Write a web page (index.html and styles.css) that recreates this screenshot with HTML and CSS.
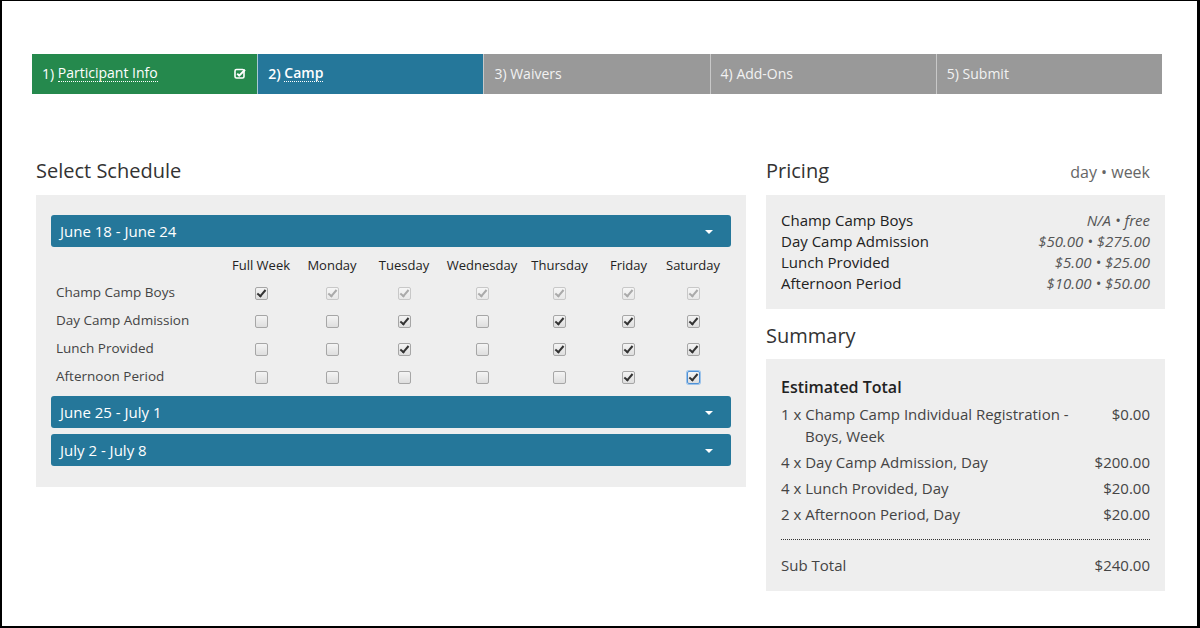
FILE: index.html
```html
<!DOCTYPE html>
<html lang="en">
<head>
  <meta charset="UTF-8">
  <title>Camp Registration</title>
  <link rel="stylesheet" href="styles.css">
</head>
<body>
  <div class="page">
    <div class="steps">
      <div class="step done">1) <span class="step-link">Participant Info</span>
        <svg class="step-check" width="12" height="11" viewBox="0 0 12 11">
          <rect x="1" y="1.5" width="9" height="8.5" rx="1.5" fill="none" stroke="#fff" stroke-width="1.6"/>
          <path d="M3.2 5.6 L5.2 7.6 L11 1.8" fill="none" stroke="#fff" stroke-width="2"/>
        </svg>
      </div>
      <div class="step active">2) <span class="step-link">Camp</span></div>
      <div class="step">3) Waivers</div>
      <div class="step">4) Add-Ons</div>
      <div class="step">5) Submit</div>
    </div>

    <div class="main">
      <div class="col-left">
        <h2 class="section-title">Select Schedule</h2>
        <div class="panel schedule">
          <div class="week-head">June 18 - June 24<span class="caret"></span></div>
          <table class="week-table">
            <colgroup>
              <col style="width:174px"><col style="width:72px"><col style="width:70px"><col style="width:74px">
              <col style="width:82px"><col style="width:73px"><col style="width:65px"><col style="width:64px">
            </colgroup>
            <thead>
              <tr><th></th><th>Full Week</th><th>Monday</th><th>Tuesday</th><th>Wednesday</th><th>Thursday</th><th>Friday</th><th>Saturday</th></tr>
            </thead>
            <tbody>
              <tr>
                <td class="label">Champ Camp Boys</td>
                <td><input type="checkbox" checked></td>
                <td><input type="checkbox" checked disabled></td>
                <td><input type="checkbox" checked disabled></td>
                <td><input type="checkbox" checked disabled></td>
                <td><input type="checkbox" checked disabled></td>
                <td><input type="checkbox" checked disabled></td>
                <td><input type="checkbox" checked disabled></td>
              </tr>
              <tr>
                <td class="label">Day Camp Admission</td>
                <td><input type="checkbox"></td>
                <td><input type="checkbox"></td>
                <td><input type="checkbox" checked></td>
                <td><input type="checkbox"></td>
                <td><input type="checkbox" checked></td>
                <td><input type="checkbox" checked></td>
                <td><input type="checkbox" checked></td>
              </tr>
              <tr>
                <td class="label">Lunch Provided</td>
                <td><input type="checkbox"></td>
                <td><input type="checkbox"></td>
                <td><input type="checkbox" checked></td>
                <td><input type="checkbox"></td>
                <td><input type="checkbox" checked></td>
                <td><input type="checkbox" checked></td>
                <td><input type="checkbox" checked></td>
              </tr>
              <tr>
                <td class="label">Afternoon Period</td>
                <td><input type="checkbox"></td>
                <td><input type="checkbox"></td>
                <td><input type="checkbox"></td>
                <td><input type="checkbox"></td>
                <td><input type="checkbox"></td>
                <td><input type="checkbox" checked></td>
                <td><input type="checkbox" class="focused" checked></td>
              </tr>
            </tbody>
          </table>
          <div class="week-head">June 25 - July 1<span class="caret"></span></div>
          <div class="week-head">July 2 - July 8<span class="caret"></span></div>
        </div>
      </div>

      <div class="col-right">
        <div class="section-row">
          <h2 class="section-title">Pricing</h2>
          <span class="unit-note">day &bull; week</span>
        </div>
        <div class="panel pricing">
          <div class="price-row"><span>Champ Camp Boys</span><em>N/A &bull; free</em></div>
          <div class="price-row"><span>Day Camp Admission</span><em>$50.00 &bull; $275.00</em></div>
          <div class="price-row"><span>Lunch Provided</span><em>$5.00 &bull; $25.00</em></div>
          <div class="price-row"><span>Afternoon Period</span><em>$10.00 &bull; $50.00</em></div>
        </div>

        <h2 class="section-title summary-title">Summary</h2>
        <div class="panel summary">
          <div class="summary-head">Estimated Total</div>
          <div class="line-item"><span class="item-name">1 x Champ Camp Individual Registration - Boys, Week</span><span class="item-price">$0.00</span></div>
          <div class="line-item"><span class="item-name">4 x Day Camp Admission, Day</span><span class="item-price">$200.00</span></div>
          <div class="line-item"><span class="item-name">4 x Lunch Provided, Day</span><span class="item-price">$20.00</span></div>
          <div class="line-item"><span class="item-name">2 x Afternoon Period, Day</span><span class="item-price">$20.00</span></div>
          <div class="subtotal"><span>Sub Total</span><span>$240.00</span></div>
        </div>
      </div>
    </div>
  </div>
</body>
</html>
```

FILE: styles.css
```css
html, body {
  margin: 0;
  height: 100%;
}

body {
  font-family: 'Open Sans', sans-serif;
  color: #333;
  background: #fff;
  box-sizing: border-box;
  border-top: 1px solid #000;
  border-left: 2px solid #000;
  border-right: 3px solid #000;
  border-bottom: 2px solid #000;
  overflow: hidden;
}

.page {
  padding: 53px 0 0 30px;
}

/* step bar */
.steps {
  display: flex;
  width: 1130px;
  height: 40px;
}

.step {
  flex: 1;
  display: flex;
  align-items: center;
  padding: 0 10px 1px;
  background-color: #999;
  color: #f2f2f2;
  font-size: 14px;
  border-left: 1px solid #c8c8c8;
  white-space: pre;
}

.step.done {
  background-color: #25894d;
  color: #fff;
  border-left: none;
}

.step.active {
  background-color: #25779a;
  color: #fff;
  font-weight: 600;
  border-left-color: #a9c9d6;
}

.step-link {
  border-bottom: 1px dotted #fff;
  line-height: 16px;
}

.step-check {
  margin-left: auto;
  margin-right: 1px;
}

/* columns */
.main {
  display: flex;
  gap: 20px;
  margin-top: 64px;
  padding-left: 4px;
}

.col-left {
  width: 710px;
}

.col-right {
  width: 399px;
}

.section-title {
  margin: 0 0 11px;
  font-size: 20px;
  font-weight: 400;
  line-height: 26px;
  color: #333;
}

.section-row {
  display: flex;
  justify-content: space-between;
  align-items: baseline;
  padding-right: 15px;
}

.unit-note {
  font-size: 16px;
  color: #666;
}

.panel {
  background-color: #eee;
}

/* schedule */
.schedule {
  padding: 20px 15px 15px;
}

.week-head {
  position: relative;
  height: 32px;
  line-height: 32px;
  padding-left: 9px;
  margin-bottom: 6px;
  border-radius: 3px;
  background-color: #25779a;
  color: #fff;
  font-size: 15px;
}

.caret {
  position: absolute;
  right: 18px;
  top: 15px;
  border-left: 4px solid transparent;
  border-right: 4px solid transparent;
  border-top: 4px solid #fff;
}

.week-table {
  table-layout: fixed;
  border-collapse: collapse;
  width: 674px;
  margin: -2px 0 6px;
}

.week-table th {
  height: 27px;
  font-size: 13px;
  font-weight: 400;
  color: #222;
  text-align: center;
  padding: 0;
}

.week-table td {
  height: 28px;
  text-align: center;
  padding: 0;
}

.week-table td.label {
  text-align: left;
  padding-left: 5px;
  font-size: 13.5px;
  color: #444;
}

.week-table input {
  -webkit-appearance: none;
  appearance: none;
  position: relative;
  width: 13px;
  height: 13px;
  margin: 0;
  vertical-align: middle;
  border: 1px solid #a6a6a6;
  border-radius: 2px;
  background: linear-gradient(#f4f4f4, #dedede);
}

.week-table input:checked::after {
  content: '';
  position: absolute;
  left: 3px;
  top: 0px;
  width: 3px;
  height: 7px;
  border-right: 2px solid #333;
  border-bottom: 2px solid #333;
  transform: rotate(40deg);
}

.week-table input:disabled {
  border-color: #c8c8c8;
  background: linear-gradient(#f6f6f6, #e8e8e8);
}

.week-table input:disabled::after {
  border-color: #aaa;
}

.week-table input.focused {
  border-color: #4d90d6;
  box-shadow: 0 0 0 1px #9cc3ea;
}

/* pricing */
.pricing {
  padding: 15px 15px;
}

.price-row {
  display: flex;
  justify-content: space-between;
  font-size: 15px;
  line-height: 21px;
  color: #222;
}

.price-row em {
  color: #555;
}

/* summary */
.summary-title {
  margin: 14px 0 10px;
}

.summary {
  padding: 16px 15px 15px;
}

.summary-head {
  font-size: 16px;
  font-weight: 600;
  line-height: 24px;
  color: #222;
  margin-bottom: 4px;
}

.line-item {
  display: flex;
  font-size: 15px;
  line-height: 22px;
  color: #444;
  margin-bottom: 4px;
}

.item-name {
  flex: 1;
  padding-left: 24px;
  text-indent: -24px;
  padding-right: 10px;
}

.item-price {
  width: 70px;
  text-align: right;
}

.subtotal {
  display: flex;
  justify-content: space-between;
  margin-top: 14px;
  padding-top: 14px;
  border-top: 1px dotted #333;
  font-size: 15px;
  line-height: 22px;
  color: #444;
}
```
